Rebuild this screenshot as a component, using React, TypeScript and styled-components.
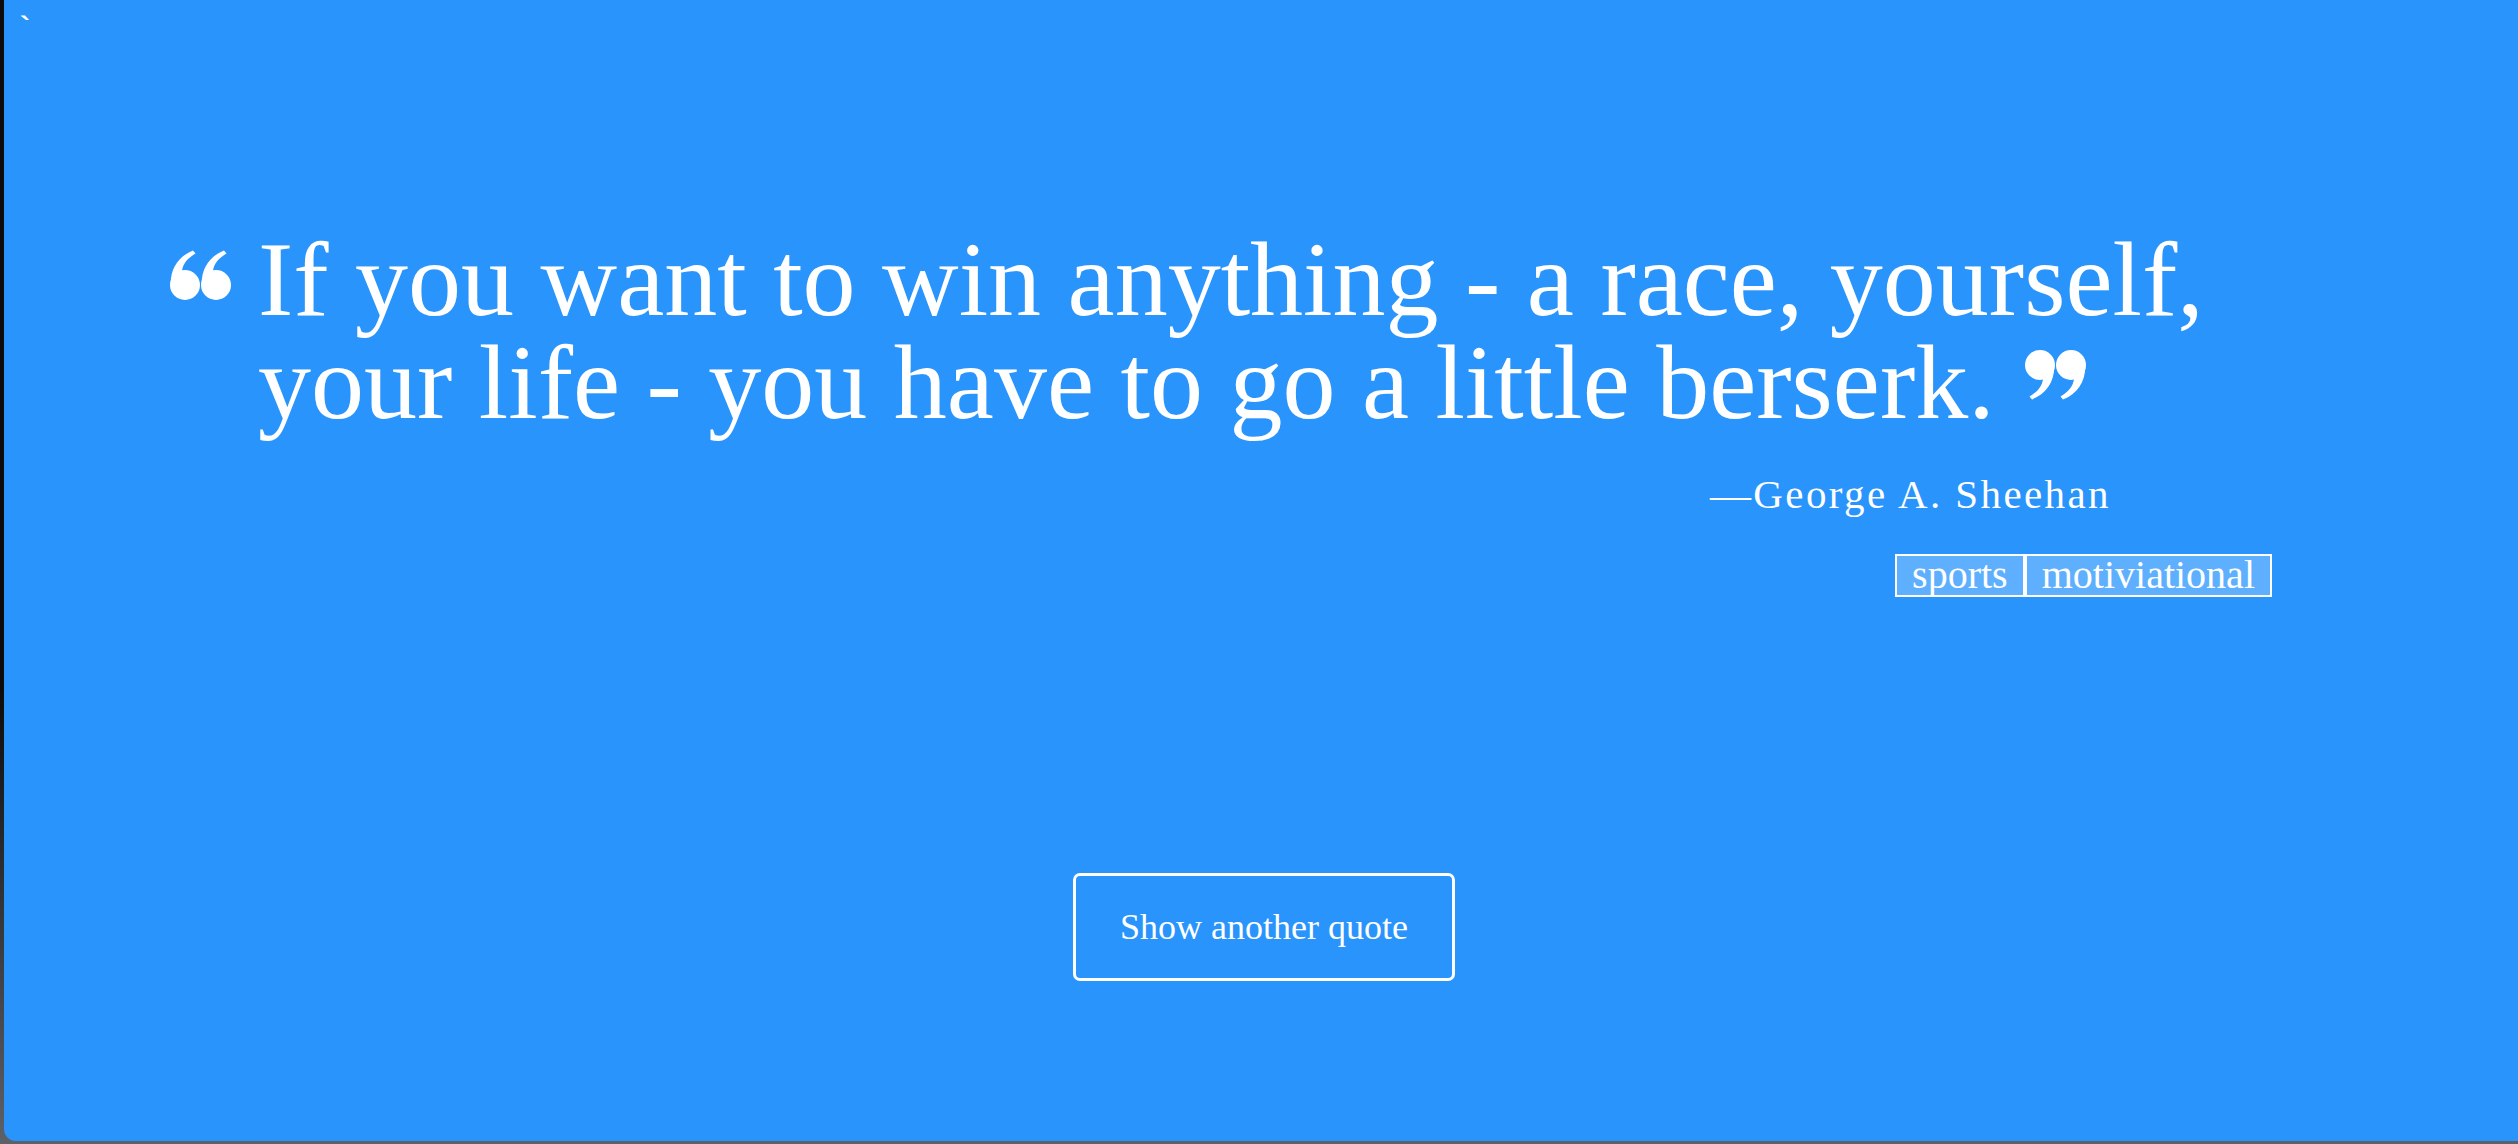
import React from "react";
import styled, { createGlobalStyle } from "styled-components";

const Global = createGlobalStyle`
  html, body {
    margin: 0;
    padding: 0;
    background: #1c1d20;
  }
  #root {
    height: 1144px;
  }
`;

const Frame = styled.div`
  display: flex;
  height: 1144px;
  box-sizing: border-box;
  padding: 0 0 3px 4px;
  background: linear-gradient(to bottom, #0b0b0b 0%, #0b0b0b 60%, #5d6168 100%);
`;

const Panel = styled.main`
  flex: 1;
  display: flex;
  flex-direction: column;
  background: #2994fc;
  border-bottom-left-radius: 12px;
  color: #ffffff;
  overflow: hidden;
`;

const Tick = styled.div`
  height: 30px;
  margin: 12px 0 0 16px;
  font-family: "Liberation Sans", Arial, sans-serif;
  font-size: 30px;
  font-weight: 700;
  line-height: 30px;
  color: #ffffff;
`;

const Content = styled.section`
  width: 2102px;
  margin: 186px 0 0 166px;
  display: flex;
  flex-direction: column;
`;

const QuoteRow = styled.div`
  display: flex;
  align-items: flex-start;
  gap: 27px;
`;

const QuoteMark = styled.svg<{ $inline?: boolean }>`
  flex: none;
  width: 61px;
  height: 50px;
  fill: #ffffff;
  margin-top: ${(p) => (p.$inline ? "0" : "22px")};
  vertical-align: ${(p) => (p.$inline ? "18px" : "baseline")};
  margin-left: ${(p) => (p.$inline ? "4px" : "0")};
`;

const QuoteText = styled.blockquote`
  flex: 1;
  margin: 0;
  font-family: "Liberation Serif", "Times New Roman", serif;
  font-size: 106px;
  line-height: 103px;
  font-weight: 400;
  color: #ffffff;
`;

const Author = styled.p`
  margin: 35px 161px 0 0;
  text-align: right;
  font-family: "Liberation Serif", "Times New Roman", serif;
  font-size: 41px;
  line-height: 50px;
  letter-spacing: 2.4px;
`;

const Tags = styled.div`
  display: flex;
  justify-content: flex-end;
  margin-top: 35px;
`;

const Tag = styled.span`
  display: block;
  height: 43px;
  box-sizing: border-box;
  padding: 0 15px;
  border: 2px solid #ffffff;
  background: rgba(255, 255, 255, 0.25);
  font-family: "Liberation Serif", "Times New Roman", serif;
  font-size: 40px;
  line-height: 38px;
  color: #ffffff;
`;

const ButtonRow = styled.div`
  display: flex;
  justify-content: center;
  margin-top: 276px;
  padding-left: 6px;
`;

const Button = styled.button`
  display: flex;
  align-items: center;
  justify-content: center;
  height: 108px;
  width: 382px;
  box-sizing: border-box;
  border: 3px solid #ffffff;
  border-radius: 7px;
  background: transparent;
  color: #ffffff;
  font-family: "Liberation Serif", "Times New Roman", serif;
  font-size: 36px;
  line-height: 40px;
  padding: 0;
  cursor: pointer;
`;

const Marks: React.FC = () => (
  <>
    <path d="M23 0.5 C9 6, 0.5 18, 0.7 34 L15 35 L12 21 C13 13, 18 8, 25.5 3.5 Z" />
    <circle cx="15" cy="35" r="15" />
    <path d="M54 0.5 C40 6, 31.5 18, 31.7 34 L46 35 L43 21 C44 13, 49 8, 56.5 3.5 Z" />
    <circle cx="46" cy="35" r="15" />
  </>
);

export default function App() {
  return (
    <>
      <Global />
      <Frame>
        <Panel>
          <Tick>`</Tick>
          <Content>
            <QuoteRow>
              <QuoteMark viewBox="0 0 61 50" aria-hidden="true">
                <Marks />
              </QuoteMark>
              <QuoteText>
                If you want to win anything - a race, yourself, your life - you have to go a little berserk.{" "}
                <QuoteMark $inline viewBox="0 0 61 50" aria-hidden="true">
                  <g transform="rotate(180 30.5 25)">
                    <Marks />
                  </g>
                </QuoteMark>
              </QuoteText>
            </QuoteRow>
            <Author>—George A. Sheehan</Author>
            <Tags>
              <Tag>sports</Tag>
              <Tag>motiviational</Tag>
            </Tags>
          </Content>
          <ButtonRow>
            <Button type="button">Show another quote</Button>
          </ButtonRow>
        </Panel>
      </Frame>
    </>
  );
}
